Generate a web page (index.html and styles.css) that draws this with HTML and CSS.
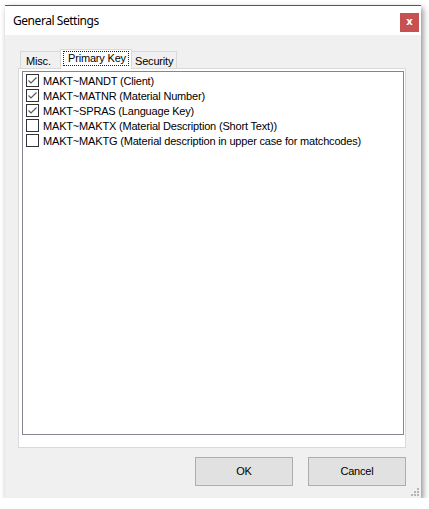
FILE: index.html
```html
<!DOCTYPE html>
<html>
<head>
<meta charset="utf-8">
<link rel="stylesheet" href="styles.css">
</head>
<body>
<div class="window">
  <div class="titlebar">
    <span class="title">General Settings</span>
    <span class="close">x</span>
  </div>
  <div class="content">
    <div class="tabs">
      <div class="tab tab-misc">Misc.</div>
      <div class="tab selected"><span class="focus">Primary Key</span></div>
      <div class="tab tab-sec">Security</div>
    </div>
    <div class="panel">
      <div class="list">
        <div class="row"><span class="box"><svg width="11" height="11" viewBox="0 0 11 11"><path d="M1.5 5.5 L4 8 L9.5 2.5" fill="none" stroke="#5a5a5a" stroke-width="1.2"/></svg></span>MAKT~MANDT (Client)</div>
        <div class="row"><span class="box"><svg width="11" height="11" viewBox="0 0 11 11"><path d="M1.5 5.5 L4 8 L9.5 2.5" fill="none" stroke="#5a5a5a" stroke-width="1.2"/></svg></span>MAKT~MATNR (Material Number)</div>
        <div class="row"><span class="box"><svg width="11" height="11" viewBox="0 0 11 11"><path d="M1.5 5.5 L4 8 L9.5 2.5" fill="none" stroke="#5a5a5a" stroke-width="1.2"/></svg></span>MAKT~SPRAS (Language Key)</div>
        <div class="row"><span class="box"></span>MAKT~MAKTX (Material Description (Short Text))</div>
        <div class="row"><span class="box"></span>MAKT~MAKTG (Material description in upper case for matchcodes)</div>
      </div>
    </div>
    <div class="buttons">
      <div class="btn">OK</div>
      <div class="btn">Cancel</div>
    </div>
    <div class="grip"></div>
  </div>
</div>
</body>
</html>
```
FILE: styles.css
```css
html, body {
  margin: 0;
  padding: 0;
  background: #ffffff;
}
body {
  font-family: "Liberation Sans", Arial, sans-serif;
  font-size: 11px;
  letter-spacing: -0.18px;
  color: #000;
}
.window {
  margin: 5px 0 0 5px;
  width: 416px;
  height: 493px;
  display: flex;
  flex-direction: column;
  box-shadow: 2px 3px 6px rgba(0,0,0,0.45);
  background: #f0f0f0;
  border-top: 1px solid #4d5864;
  box-sizing: border-box;
}
.titlebar {
  height: 29px;
  background: #ffffff;
  display: flex;
  align-items: flex-start;
  justify-content: space-between;
  flex: none;
}
.title {
  font-family: "Noto Sans", "Open Sans", sans-serif;
  font-size: 12px;
  letter-spacing: -0.45px;
  padding: 6px 0 0 8px;
  color: #000;
}
.close {
  width: 19px;
  height: 19px;
  margin: 7px 2px 0 0;
  background: #c75050;
  color: #fff;
  font-family: "DejaVu Sans", sans-serif;
  font-weight: bold;
  font-size: 10px;
  letter-spacing: 0;
  line-height: 18px;
  text-align: center;
}
.content {
  flex: 1;
  padding: 14px 15px 0 13px;
  position: relative;
  display: flex;
  flex-direction: column;
}
.tabs {
  display: flex;
  align-items: flex-end;
  padding-left: 2px;
  height: 19px;
  position: relative;
  z-index: 1;
}
.tab {
  height: 17px;
  box-sizing: border-box;
  border: 1px solid #d9d9d9;
  border-bottom: none;
  background: #f0f0f0;
  line-height: 18px;
  white-space: nowrap;
}
.tab-misc {
  width: 42px;
  padding-left: 5px;
}
.tab.selected {
  background: #ffffff;
  width: 72px;
  height: 20px;
  margin: 0 -2px -1px -2px;
  padding: 1px 2px 0 2px;
  position: relative;
  z-index: 2;
}
.tab-sec {
  width: 47px;
  padding-left: 4px;
}
.focus {
  display: block;
  height: 15px;
  box-sizing: border-box;
  line-height: 13px;
  border: 1px dotted #222;
  padding: 0 0 0 4px;
}
.panel {
  width: 388px;
  height: 380px;
  box-sizing: border-box;
  border: 1px solid #d9d9d9;
  background: #fff;
  padding: 2px 0 0 3px;
}
.list {
  width: 382px;
  height: 364px;
  box-sizing: border-box;
  border: 1px solid #828790;
  padding: 2px 0 0 3px;
}
.row {
  height: 15px;
  display: flex;
  align-items: flex-start;
  line-height: 14px;
  white-space: nowrap;
}
.box {
  width: 13px;
  height: 13px;
  box-sizing: border-box;
  border: 1px solid #333;
  background: #fff;
  margin-right: 4px;
  flex: none;
  display: flex;
  align-items: center;
  justify-content: center;
}
.box svg {
  display: block;
}
.buttons {
  display: flex;
  justify-content: flex-end;
  gap: 15px;
  margin-top: 9px;
}
.btn {
  width: 98px;
  height: 29px;
  box-sizing: border-box;
  border: 1px solid #adadad;
  background: #e1e1e1;
  text-align: center;
  line-height: 27px;
}
.grip {
  position: absolute;
  right: 2px;
  bottom: 2px;
  width: 8px;
  height: 8px;
  background:
    linear-gradient(#b5b5b5, #b5b5b5) 6px 0 / 2px 2px no-repeat,
    linear-gradient(#b5b5b5, #b5b5b5) 3px 3px / 2px 2px no-repeat,
    linear-gradient(#b5b5b5, #b5b5b5) 6px 3px / 2px 2px no-repeat,
    linear-gradient(#b5b5b5, #b5b5b5) 0 6px / 2px 2px no-repeat,
    linear-gradient(#b5b5b5, #b5b5b5) 3px 6px / 2px 2px no-repeat,
    linear-gradient(#b5b5b5, #b5b5b5) 6px 6px / 2px 2px no-repeat;
}
```
